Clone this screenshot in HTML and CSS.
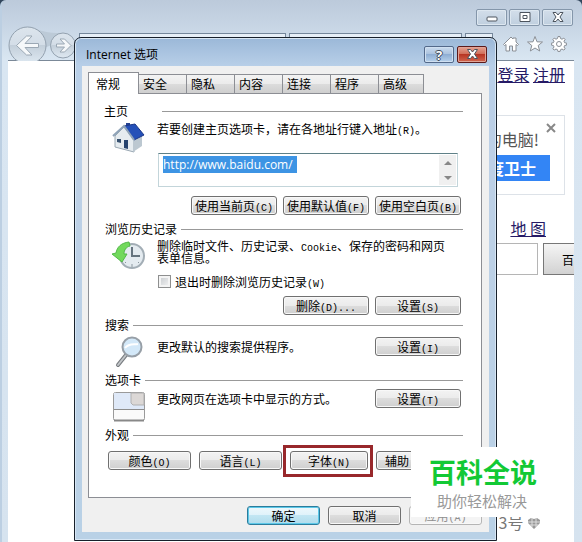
FILE: index.html
```
<!DOCTYPE html>
<html lang="zh-CN">
<head>
    <meta charset="utf-8">
    <title>Internet 选项</title>
    <link rel="stylesheet" href="styles.css">
</head>
<body>

<!-- 浏览器窗口 -->
<div class="browser">
    <div class="caption">
        <button class="cap-btn" aria-label="最小化"><svg width="30" height="16" viewBox="0 0 30 16"><rect x="10" y="8" width="10" height="4" rx="1"/></svg></button>
        <button class="cap-btn" aria-label="最大化"><svg width="30" height="16" viewBox="0 0 30 16"><path d="M10 3.500h10v9h-10zM13 6.500h4v3h-4z"/></svg></button>
        <button class="cap-btn" aria-label="关闭"><svg width="30" height="16" viewBox="0 0 30 16"><path d="M10 3.500h3l2 2.500 2-2.500h3l-3 4.500 3 4.500h-3l-2-2.500-2 2.500h-3l3-4.500z"/></svg></button>
    </div>
    <div class="toolbar">
        <svg class="nav" width="68" height="36" viewBox="0 0 68 36">
            <defs>
                <linearGradient id="glass" x1="0" y1="0" x2="0" y2="1">
                    <stop offset="0" stop-color="#dce5ed"/>
                    <stop offset=".5" stop-color="#d3dde7"/>
                    <stop offset=".5" stop-color="#c3cfda"/>
                    <stop offset="1" stop-color="#dfe9f2"/>
                </linearGradient>
            </defs>
            <path class="bridge" d="M22 1c12 4 16 6 32 6v8L36 22z"/>
            <circle class="ring" cx="19.500" cy="19.500" r="18.500"/>
            <circle class="ring" cx="55" cy="19.500" r="12.500"/>
            <path class="arrow" d="M8.500 19.500l10-9.500h5.500l-7 7.500h13.500v4H17l7 7.500h-5.500z"/>
            <path class="arrow" d="M63 19.500l-6.500-6.500h-4.500l4.500 5h-8v3h8l-4.500 5h4.500z"/>
        </svg>
        <div class="address">
            <div class="url-bar"></div>
            <div></div>
            <div class="new-tab"></div>
        </div>
        <div class="tools">
            <svg width="16" height="16" viewBox="0 0 16 16"><path d="M8 1l2 2V2h3v4l2.500 2.500-1 1L13 8.500V15H9.500v-5h-3v5H3V8.500l-1.500 1-1-1z"/></svg>
            <svg width="16" height="16" viewBox="0 0 16 16"><path d="M8 .5l2 5.300 5.500.2-4.300 3.500 1.500 5.500L8 12l-4.700 3 1.500-5.500L.5 6 6 5.800z"/></svg>
            <svg width="16" height="16" viewBox="0 0 16 16"><path d="M7 .5h2l.5 2 1.500.7 1.800-1.100 1.300 1.300L13 5.200l.6 1.500 2 .4v2l-2 .4-.6 1.500 1.100 1.800-1.300 1.300-1.800-1.100-1.500.7-.5 1.900H7l-.5-1.900-1.500-.7-1.800 1.100-1.300-1.300L3 10.900 2.400 9.500l-2-.4v-2l2-.4L3 5.200 1.900 3.400l1.300-1.300L5 3.200l1.500-.7z"/><circle cx="8" cy="8" r="2.500"/></svg>
        </div>
    </div>
    <div class="page">
        <div class="login"><a href="#">登录</a> <a href="#">注册</a></div>
        <div class="ad">
            <svg class="ad-close" width="10" height="10" viewBox="0 0 10 10"><path d="M1 1l8 8M9 1l-8 8"/></svg>
            <div class="ad-text">的电脑!</div>
            <div class="ad-banner">度卫士</div>
        </div>
        <div class="map"><a href="#">地 图</a></div>
        <div class="search">
            <input class="search-box" type="text" aria-label="搜索">
            <button class="search-btn">百</button>
        </div>
        <div class="record">3号
            <svg width="14" height="12" viewBox="0 0 14 12"><path d="M1 3l3-2 3 1 3-1 3 2v3l-3 3-3 3-3-3-3-3z"/><path class="light" d="M1 5h12M3 8h8M5 1v9M9 1v9"/></svg>
        </div>
    </div>
</div>

<!-- Internet 选项 对话框 -->
<div class="dialog">
    <div class="dialog-title">
        <span>Internet 选项</span>
        <button class="help" aria-label="帮助">?</button>
        <button class="close" aria-label="关闭"><svg width="28" height="14" viewBox="0 0 28 14"><path d="M9.500 2.500h3l2 2.500 2-2.500h3l-3 4.500 3 4.500h-3l-2-2.500-2 2.500h-3l3-4.500z"/></svg></button>
    </div>
    <div class="client">
        <div class="tabs">
            <button class="tab active">常规</button>
            <button class="tab">安全</button>
            <button class="tab">隐私</button>
            <button class="tab">内容</button>
            <button class="tab">连接</button>
            <button class="tab">程序</button>
            <button class="tab">高级</button>
        </div>
        <div class="panel">
            <section class="home">
                <h2 class="wide">主页</h2>
                <svg class="icon" width="34" height="32" viewBox="0 0 34 32">
                    <path d="M14 1h4v6h-4z" fill="#24418f"/>
                    <path d="M3 14l9-9 10 12v13L3 25z" fill="#e6ecf0" stroke="#9aa8b3"/>
                    <path d="M21 17l9-3v10l-9 6z" fill="#bcc8d1"/>
                    <path d="M12 4l11-2 9 11-10 5z" fill="#2450b8" stroke="#1b3788"/>
                    <path d="M1 14L12 4l10 14" fill="none" stroke="#8fa3b8" stroke-width="2"/>
                    <path d="M12 18h4v9l-4-1z" fill="#26436f"/>
                    <path d="M5 17h4v4l-4-1z" fill="#36506f"/>
                </svg>
                <div class="body">
                    <label for="url">若要创建主页选项卡，请在各地址行键入地址<kbd>(R)</kbd>。</label>
                    <div class="url-box">
                        <input id="url" type="text" value="http://www.baidu.com/">
                        <div class="scroll"><i class="up"></i><i class="down"></i></div>
                    </div>
                    <div class="buttons">
                        <button class="btn">使用当前页<kbd>(C)</kbd></button>
                        <button class="btn">使用默认值<kbd>(F)</kbd></button>
                        <button class="btn">使用空白页<kbd>(B)</kbd></button>
                    </div>
                </div>
            </section>

            <section class="history">
                <h2>浏览历史记录</h2>
                <svg class="icon" width="34" height="32" viewBox="0 0 34 32">
                    <circle cx="20" cy="16" r="12" fill="#e4ebf0" stroke="#a3aeb6" stroke-width="2"/>
                    <path d="M20 7v9h8" fill="none" stroke="#66747f" stroke-width="2"/>
                    <path d="M20 24v3M10 16h3M26 22l1 1M14 22l-1 1" stroke="#8b979f"/>
                    <path d="M17 2C9 3 5 7 4 13L0 14l10 8 5-8h-3c0-4 2-7 6-8z" fill="#72d95c" stroke="#52b848"/>
                </svg>
                <div class="body">
                    <p>删除临时文件、历史记录、<kbd>Cookie</kbd>、保存的密码和网页<br>表单信息。</p>
                    <div class="check">
                        <input type="checkbox" id="exit">
                        <label for="exit">退出时删除浏览历史记录<kbd>(W)</kbd></label>
                    </div>
                    <div class="buttons">
                        <button class="btn">删除<kbd>(D)...</kbd></button>
                        <button class="btn">设置<kbd>(S)</kbd></button>
                    </div>
                </div>
            </section>

            <section class="one-line">
                <h2>搜索</h2>
                <svg class="icon" width="34" height="32" viewBox="0 0 34 32">
                    <path d="M14 19L6 29" stroke="#75797d" stroke-width="4" stroke-linecap="round"/>
                    <path d="M14 19L6 29" stroke="#c2c6c9" stroke-width="2" stroke-linecap="round"/>
                    <circle cx="20" cy="11" r="9.500" fill="#d3e8f8" stroke="#979fa7" stroke-width="2"/>
                    <path d="M13 12c4-5 9-3 13-4" fill="none" stroke="#fff" stroke-width="2"/>
                </svg>
                <div class="body">
                    <p>更改默认的搜索提供程序。</p>
                    <button class="btn">设置<kbd>(I)</kbd></button>
                </div>
            </section>

            <section class="one-line compact">
                <h2>选项卡</h2>
                <svg class="icon" width="34" height="32" viewBox="0 0 34 32">
                    <rect x="1.500" y="1.500" width="31" height="28" rx="2" fill="#fafafa" stroke="#9a9a9a"/>
                    <path d="M2 2h17v10l2 2h11v4H2z" fill="#dfe9f8"/>
                    <path d="M19 2h13v12H21l-2-2z" fill="#dcd8d6" stroke="#b0b0b0"/>
                    <path d="M2 18.500h30" stroke="#8d8d8d"/>
                    <path d="M2 29.500h30" stroke="#888" stroke-width="2"/>
                </svg>
                <div class="body">
                    <p>更改网页在选项卡中显示的方式。</p>
                    <button class="btn">设置<kbd>(T)</kbd></button>
                </div>
            </section>

            <section class="look">
                <h2>外观</h2>
                <div class="buttons">
                    <button class="btn">颜色<kbd>(O)</kbd></button>
                    <button class="btn">语言<kbd>(L)</kbd></button>
                    <button class="btn marked">字体<kbd>(N)</kbd></button>
                    <button class="btn last">辅助</button>
                </div>
            </section>
        </div>
        <div class="footer">
            <button class="btn default">确定</button>
            <button class="btn">取消</button>
            <button class="btn" disabled>应用<kbd>(A)</kbd></button>
        </div>
    </div>
</div>

<!-- 水印 -->
<div class="watermark">
    <strong>百科全说</strong>
    <span>助你轻松解决</span>
</div>

</body>
</html>
```
FILE: styles.css
```
* {
    box-sizing: border-box;
}
html {
    background: #32465c;
}
body {
    margin: 0;
    overflow: hidden;
    font-family: "Noto Sans CJK SC", sans-serif;
    font-size: 12px;
    color: #000;
}
button, input {
    font-family: inherit;
    font-size: 12px;
    margin: 0;
    padding: 0;
}
h2, p {
    margin: 0;
    font-size: 12px;
    font-weight: normal;
}
/* 括号里的快捷键 */
kbd {
    font-family: "Liberation Mono", monospace;
    font-size: 10px;
    line-height: 1;
}

/* 浏览器窗口 */
.browser {
    display: flex;
    flex-direction: column;
    min-height: 100vh;
    padding: 0 8px 0 6px;
    border-left: 2px solid #bccfe2;
    border-radius: 6px 6px 0 0;
    background: linear-gradient(#bccadb, #c9d7e6 30px, #d9e6f2 60px, #d6e3ef);
}
.caption {
    display: flex;
    justify-content: flex-end;
    gap: 2px;
    padding: 9px 1px 0 0;
}
.cap-btn {
    width: 31px;
    height: 17px;
    border: 1px solid #8496aa;
    border-radius: 2px;
    background: linear-gradient(#d3deea, #bfcfdf);
    box-shadow: inset 0 0 0 1px #dde7f0;
}
.cap-btn svg, .close svg {
    display: block;
    margin: -1px auto 0;
    fill: #fff;
    stroke: #4c545e;
}
.toolbar {
    display: flex;
    height: 35px;
    border-bottom: 1px solid #7b8998;
}
.nav {
    flex: none;
}
.bridge {
    fill: #bccad7;
}
.ring {
    fill: url(#glass);
    stroke: #93a1af;
}
.arrow {
    fill: #f5f8fa;
    stroke: #9ba8b4;
}
.address {
    flex: 1;
    display: flex;
    gap: 3px;
    height: 24px;
    margin: 7px 10px 0 3px;
}
.address div {
    flex: 5;
    border: 1px solid #75879b;
    background: #e7eff7;
}
.address .url-bar {
    flex: 6;
}
.address .new-tab {
    flex: none;
    width: 28px;
}
.tools {
    display: flex;
    gap: 8px;
    padding: 10px 7px 0 0;
}
.tools svg {
    fill: #fff;
    stroke: #8a8f96;
}
.page {
    flex: 1;
    display: flex;
    flex-direction: column;
    align-items: flex-end;
    background: #fff;
    overflow: hidden;
}
.page a {
    color: #261a66;
}
.login {
    padding: 0 9px;
    font-size: 16px;
    line-height: 26px;
}
.ad {
    display: grid;
    grid-template-columns: 1fr 10px;
    width: 200px;
    margin: 28px 9px 0 0;
    padding: 7px 8px 13px;
    border: 1px solid #dde2e8;
    color: #555;
    text-align: right;
}
.ad-close {
    grid-column: 2;
    grid-row: 1;
    stroke: #888;
    stroke-width: 2;
}
.ad-text {
    grid-column: 1;
    grid-row: 1;
    padding: 5px 7px 0 0;
    font-size: 16px;
    line-height: 22px;
}
.ad-banner {
    grid-column: 1 / 3;
    margin: 5px 6px 0 0;
    padding-right: 14px;
    background: #3385f5;
    color: #fff;
    font-size: 16px;
    font-weight: bold;
    line-height: 26px;
}
.map {
    padding: 20px 28px 0 0;
    font-size: 16px;
    line-height: 26px;
}
.search {
    display: flex;
    gap: 5px;
    margin-top: 2px;
}
.search-box {
    width: 200px;
    height: 32px;
    border: 1px solid #b5b5b5;
}
.search-btn {
    width: 31px;
    height: 32px;
    padding-left: 18px;
    border: 1px solid #777;
    border-right: 0;
    background: linear-gradient(#f5f5f5, #d2d2d2);
    text-align: left;
}
.record {
    margin-top: auto;
    padding: 0 33px 8px 0;
    color: #777;
    font-size: 16px;
    line-height: 24px;
}
.record svg {
    fill: #999;
}
.record .light {
    stroke: #ddd;
}

/* 对话框 */
.dialog {
    position: absolute;
    left: 74px;
    top: 37px;
    width: 423px;
    padding: 0 7px 8px;
    border: 1px solid #17202b;
    border-radius: 7px 7px 0 0;
    background: linear-gradient(#9bb8d8, #b8cfe8 28px, #bdd0e6 120px, #b9d1e6);
    box-shadow: inset 0 0 0 1px #d7e6f4;
}
.dialog-title {
    display: flex;
    gap: 3px;
    height: 28px;
    padding: 8px 2px 0 4px;
    font-family: "Open Sans", "Noto Sans CJK SC", sans-serif;
    font-size: 12px;
    line-height: 18px;
}
.dialog-title span {
    flex: 1;
}
.help, .close {
    width: 30px;
    height: 17px;
    border: 1px solid #53698a;
    border-radius: 2px;
    background: linear-gradient(#cbdcef, #a8c0dd 50%, #8faed3 50%, #b6d0eb);
    box-shadow: inset 0 0 0 1px #d0e0f1;
}
.help {
    color: #fff;
    font-size: 13px;
    font-weight: bold;
    line-height: 12px;
    text-shadow: 1px 0 #3f4a59, -1px 0 #3f4a59, 0 1px #3f4a59, 0 -1px #3f4a59;
}
.close {
    border-color: #5c1a1a;
    background: linear-gradient(#e5a393, #cf6a55 50%, #b83624 50%, #d0664f);
    box-shadow: inset 0 0 0 1px #e0a497;
}
.client {
    padding: 6px 7px 7px 6px;
    background: #f0f0f0;
}

/* 选项卡 */
.tabs {
    display: flex;
    align-items: flex-end;
}
.tab {
    width: 48px;
    height: 19px;
    padding-left: 4px;
    border: 1px solid #8c8e94;
    border-left: 0;
    border-bottom: 0;
    background: linear-gradient(#f3f3f3, #ebebeb 50%, #dcdcdc 50%, #cfcfcf);
    text-align: left;
    line-height: 18px;
}
.tab:last-child {
    width: 45px;
}
.tab.active {
    position: relative;
    width: 51px;
    height: 22px;
    margin-bottom: -1px;
    padding-left: 7px;
    border-left: 1px solid #8c8e94;
    background: #fff;
}
.panel {
    display: flow-root;
    padding: 9px 18px 27px 15px;
    border: 1px solid #8c8e94;
    background: #fff;
}
section {
    display: grid;
    grid-template-columns: 53px 1fr;
    align-content: start;
}
h2 {
    grid-column: 1 / 3;
    display: flex;
    align-items: center;
    gap: 4px;
    padding-left: 1px;
    line-height: 16px;
}
h2::after {
    content: "";
    flex: 1;
    height: 1px;
    background: #999;
}
h2.wide {
    gap: 34px;
    padding-left: 0;
}
.icon {
    margin: 3px 0 0 8px;
}
.buttons {
    display: flex;
    justify-content: flex-end;
    gap: 6px;
}
.body .btn {
    margin-right: 2px;
}
.body .buttons {
    gap: 4px;
}
.btn {
    width: 86px;
    height: 19px;
    border: 1px solid #707070;
    border-radius: 3px;
    background: linear-gradient(#f3f3f3, #ebebeb 50%, #dddddd 50%, #cfcfcf);
    box-shadow: inset 0 0 0 1px #f8f8f8;
    line-height: 16px;
    white-space: nowrap;
}
.btn.default {
    border-color: #2c7c9c;
    background: linear-gradient(#eef8fc, #dff2fa 50%, #c2e6f3 50%, #b0dcec);
    box-shadow: inset 0 0 0 1px #5cc8e8;
}
.btn:disabled {
    border-color: #b5b5b5;
    background: #f4f4f4;
    color: #8f8f8f;
}
.home {
    height: 118px;
}
.home label {
    display: block;
    height: 18px;
    padding-top: 2px;
    line-height: 16px;
}
.url-box {
    display: flex;
    justify-content: space-between;
    height: 34px;
    margin: 16px 5px 9px 1px;
    border: 1px solid #c3d5da;
    border-top-color: #5f8087;
}
.url-box input {
    width: 134px;
    height: 17px;
    margin: 2px 0 0 4px;
    border: 0;
    background: #3d94e4;
    color: #fff;
    font-family: "Open Sans", sans-serif;
    font-size: 12px;
}
.scroll {
    display: flex;
    flex-direction: column;
    justify-content: space-around;
    align-items: center;
    width: 17px;
    margin: 1px;
    background: #f0f0f0;
}
.scroll i {
    border: 4px solid transparent;
}
.scroll .up {
    border-top: 0;
    border-bottom-color: #888;
}
.scroll .down {
    border-bottom: 0;
    border-top-color: #888;
}
.history {
    height: 96px;
}
.history p {
    height: 28px;
    padding-top: 3px;
    line-height: 12px;
}
.history p kbd {
    line-height: 0;
}
.check {
    display: flex;
    align-items: center;
    gap: 4px;
    height: 16px;
    margin: 8px 0 7px 1px;
}
.check input {
    appearance: none;
    width: 13px;
    height: 13px;
    border: 1px solid #8e8f8f;
    background: linear-gradient(135deg, #c4c8cc, #f6f6f6);
    box-shadow: inset 0 0 0 2px #f4f4f4;
}
.one-line {
    height: 55px;
}
.one-line .body {
    display: flex;
    justify-content: space-between;
    align-items: flex-start;
    padding-top: 4px;
    line-height: 19px;
}
.compact .body {
    padding-top: 1px;
}
.look .buttons {
    grid-column: 1 / 3;
    justify-content: flex-start;
    gap: 8px;
    padding: 8px 0 0 4px;
}
.look .btn {
    width: 83px;
}
.look .marked {
    position: relative;
    width: 78px;
}
.look .last {
    padding-left: 8px;
    text-align: left;
}
.marked::after {
    content: "";
    position: absolute;
    inset: -7px -6px -8px -8px;
    border: 3px solid #98282b;
}
.footer {
    display: flex;
    justify-content: flex-end;
    gap: 8px;
    padding-top: 8px;
}
.footer .btn {
    width: 73px;
}

/* 水印 */
.watermark {
    position: absolute;
    left: 411px;
    top: 447px;
    padding: 8px 18px 4px;
    background: #fff;
    color: #999;
    font-size: 15px;
    line-height: 24px;
}
.watermark strong {
    display: block;
    color: #12c935;
    font-size: 27px;
    line-height: 34px;
}
.watermark span {
    padding-left: 8px;
}
```
